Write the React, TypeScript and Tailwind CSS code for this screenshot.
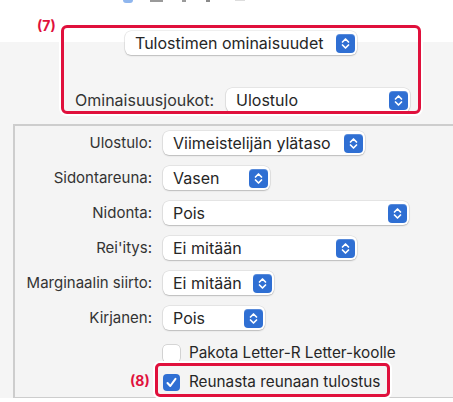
import React from "react";

const Stepper = () => (
  <span className="flex h-[19px] w-[19px] items-center justify-center rounded-[4px] bg-[#2f6fd3] shadow-[inset_0_1px_0_rgba(255,255,255,0.2)]">
    <svg width="19" height="19" viewBox="0 0 19 19" fill="none">
      <path d="M6.5 8 L9.5 5 L12.5 8" stroke="white" strokeWidth="1.7" strokeLinecap="round" strokeLinejoin="round" />
      <path d="M6.5 11 L9.5 14 L12.5 11" stroke="white" strokeWidth="1.7" strokeLinecap="round" strokeLinejoin="round" />
    </svg>
  </span>
);

const Popup = ({ text, width }: { text: string; width: string }) => (
  <div
    className={`flex h-[24px] ${width} shrink-0 items-center justify-between rounded-[6px] bg-white pl-[10px] pr-[2px] text-[16px] text-[#262626] shadow-[0_0_0_0.5px_rgba(0,0,0,0.12),0_1px_1.5px_rgba(0,0,0,0.18)]`}
  >
    <span className="whitespace-nowrap">{text}</span>
    <Stepper />
  </div>
);

const Row = ({ label, text, width }: { label: string; text: string; width: string }) => (
  <div className="flex h-[24px] items-center">
    <div className="w-[148px] shrink-0 pr-[11px] text-right text-[15px] whitespace-nowrap text-[#333]">{label}</div>
    <Popup text={text} width={width} />
  </div>
);

const Check = ({ checked, label }: { checked?: boolean; label: string }) => (
  <div className="flex h-[24px] items-center gap-[9px] pl-[148px]">
    {checked ? (
      <span className="flex h-[17px] w-[17px] items-center justify-center rounded-[4px] bg-[#2f6fd3]">
        <svg width="13" height="13" viewBox="0 0 13 13" fill="none">
          <path d="M2.5 7 L5.3 10 L10.5 2.8" stroke="white" strokeWidth="2" strokeLinecap="round" strokeLinejoin="round" />
        </svg>
      </span>
    ) : (
      <span className="h-[17px] w-[17px] rounded-[4px] bg-white shadow-[0_0_0_0.5px_rgba(0,0,0,0.25),0_1px_1px_rgba(0,0,0,0.12)]" />
    )}
    <span className="whitespace-nowrap text-[15.3px] text-[#262626]">{label}</span>
  </div>
);

export default function App() {
  return (
    <div className="relative h-[402px] w-[453px] overflow-hidden bg-white font-['Inter','Liberation_Sans',sans-serif]">
      {/* cut-off toolbar bits */}
      <div className="flex h-[5px] items-start">
        <span className="ml-[123px] h-[3px] w-[10px] rounded-b bg-[#8fb6ee]" />
        <span className="ml-[17px] h-[2px] w-[13px] bg-[#9a9a9a]" />
        <span className="ml-[19px] h-[2px] w-[4px] bg-[#9a9a9a]" />
        <span className="ml-[20px] h-[2px] w-[4px] bg-[#8a8a8a]" />
        <span className="ml-[25px] h-[1px] w-[10px] bg-[#dddddd]" />
      </div>

      <div className="bg-[linear-gradient(to_bottom,#ffffff_37px,#f5f5f5_37px)]">
        <div className="pl-[125px] pt-[26px]">
          <Popup text="Tulostimen ominaisuudet" width="w-[232px]" />
        </div>

        <div className="mt-[33px] flex h-[24px] items-center pl-[75px]">
          <div className="w-[151px] shrink-0 whitespace-nowrap text-[16px] text-[#333]">Ominaisuusjoukot:</div>
          <Popup text="Ulostulo" width="w-[184px]" />
        </div>

        <div className="ml-[13px] mt-[12px] h-[274px] border-b border-l-2 border-t-2 border-[#cdcdcd] bg-[#f4f4f4] pt-[5px]">
          <div className="flex flex-col gap-[11px]">
            <Row label="Ulostulo:" text="Viimeistelijän ylätaso" width="w-[202px]" />
            <Row label="Sidontareuna:" text="Vasen" width="w-[107px]" />
            <Row label="Nidonta:" text="Pois" width="w-[246px]" />
            <Row label="Rei'itys:" text="Ei mitään" width="w-[194px]" />
            <Row label="Marginaalin siirto:" text="Ei mitään" width="w-[111px]" />
            <Row label="Kirjanen:" text="Pois" width="w-[102px]" />
          </div>
          <div className="mt-[11px] flex flex-col gap-[5px]">
            <Check label="Pakota Letter-R Letter-koolle" />
            <Check checked label="Reunasta reunaan tulostus" />
          </div>
        </div>
      </div>

      {/* annotation (7) */}
      <div className="absolute left-[37px] top-[15px] text-[14px] font-bold text-[#e0103c]">(7)</div>
      <div className="absolute left-[61px] top-[25px] h-[89px] w-[360px] rounded-[6px] border-[3px] border-[#e0103c] shadow-[0_0_0_2px_#ffffff]" />

      {/* annotation (8) */}
      <div className="absolute left-[130px] top-[370px] text-[14px] font-bold text-[#e0103c]">(8)</div>
      <div className="absolute left-[155px] top-[363px] h-[34px] w-[235px] rounded-[5px] border-[3px] border-[#e0103c] shadow-[0_0_0_2px_#ffffff]" />
    </div>
  );
}
